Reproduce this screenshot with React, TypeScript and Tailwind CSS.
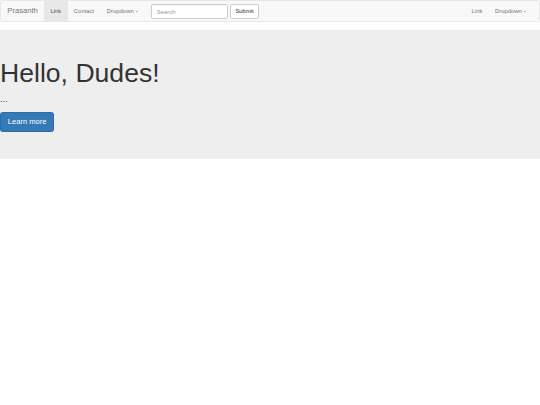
import React from "react";

const Caret = () => (
  <span className="ml-[0.84px] inline-block h-0 w-0 align-middle border-t-[1.7px] border-x-[1.7px] border-x-transparent border-t-[#777]" />
);

const NavLink = ({ children, active }: { children: React.ReactNode; active?: boolean }) => (
  <a
    className={
      active
        ? "block px-[6.33px] py-[6.33px] leading-[8.44px] bg-[#e7e7e7] text-[#555]"
        : "block px-[6.33px] py-[6.33px] leading-[8.44px] text-[#777]"
    }
  >
    {children}
  </a>
);

export default function App() {
  return (
    <div className="min-h-[405px] bg-white text-[#333] font-['Liberation_Sans',Arial,sans-serif]">
      {/* navbar */}
      <nav className="mb-[8.44px] flex h-[22px] items-start rounded-[1.7px] border border-[#e7e7e7] bg-[#f8f8f8] text-[5.9px]">
        <a className="block h-[21.1px] px-[6.33px] py-[6.33px] text-[7.6px] leading-[8.44px] text-[#777]">
          Prasanth
        </a>
        <ul className="flex">
          <li>
            <NavLink active>Link</NavLink>
          </li>
          <li>
            <NavLink>Contact</NavLink>
          </li>
          <li>
            <NavLink>
              Dropdown <Caret />
            </NavLink>
          </li>
        </ul>
        <form className="flex items-center gap-[2px] px-[6.33px] pt-[3.4px]">
          <input
            placeholder="Search"
            className="h-[14.3px] w-[77px] rounded-[1.7px] border border-[#ccc] bg-white px-[5.06px] text-[5.9px] text-[#555] shadow-[inset_0_0.4px_0.4px_rgba(0,0,0,0.075)] outline-none placeholder:text-[#999]"
          />
          <button
            type="button"
            className="h-[14.3px] rounded-[1.7px] border border-[#ccc] bg-white px-[4.6px] text-[5.9px] text-[#333]"
          >
            Submit
          </button>
        </form>
        <ul className="ml-auto mr-[6.33px] flex">
          <li>
            <NavLink>Link</NavLink>
          </li>
          <li>
            <NavLink>
              Dropdown <Caret />
            </NavLink>
          </li>
        </ul>
      </nav>

      {/* jumbotron */}
      <div className="bg-[#eee] pt-[20.25px] pb-[20.25px]">
        <h1 className="mt-[8.44px] mb-[4.22px] text-[26.6px] leading-[29.2px] text-[#333]">
          Hello, Dudes!
        </h1>
        <p className="mb-[6.33px] text-[8.86px] font-light leading-[12.66px]">...</p>
        <p className="mb-[6.33px] flex">
          <a className="block rounded-[2.5px] border-[0.5px] border-[#2e6da4] bg-[#337ab7] px-[6.75px] py-[4.2px] text-[7.6px] leading-[10.1px] text-white">
            Learn more
          </a>
        </p>
      </div>
    </div>
  );
}
